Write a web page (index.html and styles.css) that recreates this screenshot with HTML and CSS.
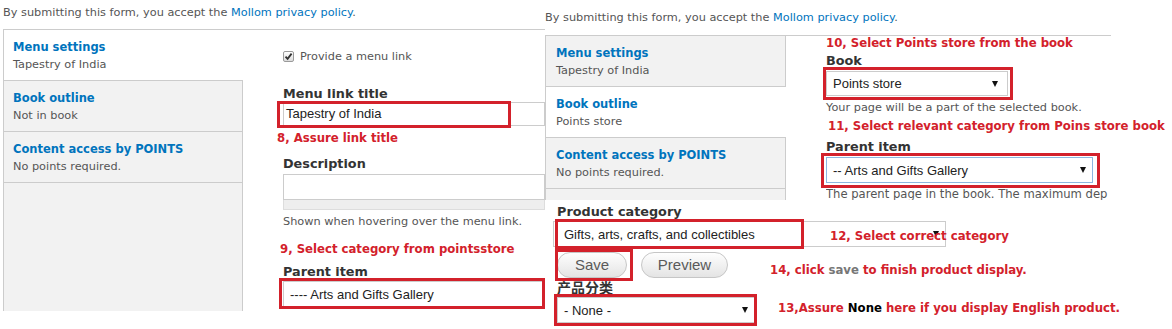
FILE: index.html
```html
<!DOCTYPE html>
<html lang="en">
<head>
<meta charset="UTF-8">
<title>Book page settings</title>
<link rel="stylesheet" href="styles.css">
</head>
<body>
<div class="board">

  <!-- left capture: menu settings tab -->
  <div class="shot shot-left">
    <p class="policy">By submitting this form, you accept the <a href="#">Mollom privacy policy</a>.</p>
    <div class="vtabs">
      <ul class="tab-list">
        <li class="tab is-active"><b>Menu settings</b><span>Tapestry of India</span></li>
        <li class="tab"><b>Book outline</b><span>Not in book</span></li>
        <li class="tab"><b>Content access by POINTS</b><span>No points required.</span></li>
      </ul>
      <div class="pane">
        <label class="check">
          <span class="checkbox">
            <svg width="9" height="9" viewBox="0 0 9 9"><path d="M1.5 4.6 L3.6 6.8 L7.6 1.6" fill="none" stroke="#333" stroke-width="1.8"/></svg>
          </span>
          Provide a menu link
        </label>
        <div class="label label-first">Menu link title</div>
        <div class="field">
          <div class="text-input">Tapestry of India</div>
          <span class="mark mark-title"></span>
        </div>
        <div class="note note-8">8, Assure link title</div>
        <div class="label label-desc">Description</div>
        <div class="textarea"></div>
        <div class="grippie"></div>
        <div class="help help-desc">Shown when hovering over the menu link.</div>
        <div class="note note-9">9, Select category from pointsstore</div>
        <div class="label label-parent">Parent item</div>
        <div class="field field-parent">
          <div class="select select-left">---- Arts and Gifts Gallery</div>
          <span class="mark mark-parent-left"></span>
        </div>
      </div>
    </div>
  </div>

  <!-- right capture: book outline tab -->
  <div class="shot shot-right">
    <p class="policy">By submitting this form, you accept the <a href="#">Mollom privacy policy</a>.</p>
    <div class="vtabs">
      <ul class="tab-list">
        <li class="tab"><b>Menu settings</b><span>Tapestry of India</span></li>
        <li class="tab is-active"><b>Book outline</b><span>Points store</span></li>
        <li class="tab"><b>Content access by POINTS</b><span>No points required.</span></li>
      </ul>
      <div class="pane pane-book">
        <div class="note note-10">10, Select Points store from the book</div>
        <div class="label label-book">Book</div>
        <div class="field field-book">
          <div class="select select-book">Points store<i class="caret"></i></div>
          <span class="mark mark-book"></span>
        </div>
        <div class="help help-book">Your page will be a part of the selected book.</div>
        <div class="note note-11">11, Select relevant category from Poins store book</div>
        <div class="label label-parent2">Parent item</div>
        <div class="field field-parent2">
          <div class="select select-parent is-focus">-- Arts and Gifts Gallery<i class="caret"></i></div>
          <span class="mark mark-parent"></span>
        </div>
        <div class="help help-parent">The parent page in the book. The maximum dep</div>
      </div>
    </div>

    <!-- pasted capture: product category + buttons -->
    <div class="product">
      <div class="label">Product category</div>
      <div class="field field-category">
        <div class="select select-category">Gifts, arts, crafts, and collectibles<i class="caret"></i></div>
        <span class="mark mark-category"></span>
        <span class="note note-12">12, Select correct category</span>
      </div>
      <div class="actions">
        <span class="field">
          <span class="btn btn-save">Save</span>
          <span class="mark mark-save"></span>
        </span>
        <span class="btn btn-preview">Preview</span>
        <span class="note note-14">14, click <em>save</em> to finish product display.</span>
      </div>
      <div class="label label-cn">产品分类</div>
      <div class="none-row">
        <div class="field">
          <div class="select select-none">- None -<i class="caret"></i></div>
          <span class="mark mark-none"></span>
        </div>
        <span class="note note-13">13,Assure <em>None</em> here if you display English product.</span>
      </div>
    </div>
  </div>

</div>
</body>
</html>
```

FILE: styles.css
```css
body {
  margin: 0;
  background: #fff;
  color: #555;
  font-family: "DejaVu Sans", Verdana, sans-serif;
  font-size: 11.3px;
}

.board {
  display: flex;
  width: 1172px;
  height: 329px;
  overflow: hidden;
}

.shot {
  position: relative;
  flex: none;
  height: 329px;
  overflow: hidden;
}

.shot-left {
  width: 545px;
}

.shot-right {
  width: 627px;
}

/* policy line */
.policy {
  margin: 0;
  line-height: 16px;
  white-space: nowrap;
}

.shot-left .policy {
  padding: 5px 0 8px 3px;
}

.shot-right .policy {
  padding: 10px 0 9px 0;
}

.policy a {
  color: #0074bd;
  text-decoration: none;
}

/* vertical tabs */
.vtabs {
  display: flex;
  border-top: 1px solid #ccc;
  border-left: 1px solid #ccc;
}

.shot-left .vtabs {
  margin-left: 3px;
  height: 281px;
}

.shot-right .vtabs {
  width: 565px;
  height: 294px;
}

.tab-list {
  flex: none;
  list-style: none;
  margin: 0;
  padding: 0;
  background: #f2f2f2;
  border-right: 1px solid #ccc;
}

.shot-left .tab-list {
  width: 238px;
}

.shot-right .tab-list {
  width: 239px;
}

.tab {
  box-sizing: border-box;
  height: 51px;
  padding: 8px 0 0 9px;
  border-bottom: 1px solid #ccc;
  line-height: 18px;
  white-space: nowrap;
}

.shot-right .tab {
  padding-left: 10px;
}

.tab b {
  display: block;
  color: #0074bd;
  font-size: 11.5px;
}

.tab span {
  display: block;
}

.tab.is-active {
  background: #fff;
  margin-right: -1px;
}

.pane {
  flex: 1;
  min-width: 0;
  padding-left: 40px;
  background: #fff;
  overflow: hidden;
  white-space: nowrap;
}

/* annotations in this pane run past its right edge */
.pane-book {
  overflow: visible;
}

/* form bits */
.field {
  position: relative;
}

.label {
  color: #333;
  font-weight: bold;
  font-size: 12.8px;
  line-height: 16px;
}

.help {
  line-height: 16px;
}

.check {
  display: flex;
  align-items: center;
  gap: 6px;
  height: 18px;
  margin-top: 17px;
}

.checkbox {
  box-sizing: border-box;
  width: 11px;
  height: 11px;
  border: 1px solid #9a9a9a;
  border-radius: 2px;
  background: linear-gradient(#fff, #dcdcdc);
  display: flex;
  align-items: center;
  justify-content: center;
}

.label-first {
  margin-top: 21px;
}

.text-input {
  box-sizing: border-box;
  width: 262px;
  height: 24px;
  padding-left: 2px;
  border: 1px solid #ccc;
  color: #222;
  font-family: "Liberation Sans", Arial, sans-serif;
  font-size: 13px;
  line-height: 22px;
}

.label-desc {
  margin-top: 10px;
}

.textarea {
  box-sizing: border-box;
  width: 262px;
  height: 26px;
  margin-top: 2px;
  border: 1px solid #ccc;
}

.grippie {
  box-sizing: border-box;
  width: 262px;
  height: 10px;
  background: #eee;
  border: 1px solid #ddd;
  border-top: 0;
}

.help-desc {
  margin-top: 4px;
}

.label-parent {
  margin-top: 7px;
}

.field-parent {
  margin-top: 1px;
}

.select {
  box-sizing: border-box;
  display: flex;
  align-items: center;
  justify-content: space-between;
  height: 26px;
  padding: 0 6px;
  border: 1px solid #ccc;
  background: #fff;
  color: #222;
  font-family: "Liberation Sans", Arial, sans-serif;
  font-size: 13px;
}

.select-left {
  width: 262px;
}

.caret {
  width: 0;
  height: 0;
  border-left: 3.5px solid transparent;
  border-right: 3.5px solid transparent;
  border-top: 6px solid #111;
}

/* right tab pane */
.label-book {
  margin-top: 3px;
}

.field-book {
  margin-top: 2px;
}

.select-book {
  width: 182px;
  height: 25px;
  padding-right: 9px;
}

.help-book {
  margin-top: 4px;
}

.label-parent2 {
  margin-top: 6px;
}

.field-parent2 {
  margin-top: 2px;
}

.select-parent {
  width: 267px;
}

.select.is-focus {
  border-color: #8db6df;
}

.help-parent {
  width: 284px;
  margin-top: 3px;
  overflow: hidden;
  font-size: 11.6px;
}

/* pasted product capture */
.product {
  position: absolute;
  left: 0;
  top: 200px;
  right: 0;
  bottom: 0;
  padding: 4px 0 0 12px;
  background: #fff;
  white-space: nowrap;
}

.field-category {
  margin: 1px 0 0 -4px;
}

.select-category {
  width: 393px;
  padding-left: 10px;
}

.actions {
  display: flex;
  align-items: flex-start;
  margin-top: 5px;
}

.btn {
  box-sizing: border-box;
  display: block;
  height: 26px;
  border: 1px solid #c6c6c6;
  border-radius: 13px;
  background: linear-gradient(#fefefe, #e4e4e4);
  color: #5a5a5a;
  font-family: "Liberation Sans", Arial, sans-serif;
  font-size: 15px;
  line-height: 24px;
  text-align: center;
}

.btn-save {
  width: 70px;
}

.btn-preview {
  width: 87px;
  margin-left: 14px;
}

.label-cn {
  margin-top: 2px;
  font-family: "DejaVu Sans", "Noto Sans CJK SC", sans-serif;
  font-size: 14px;
}

.none-row {
  display: flex;
  align-items: flex-start;
  margin-top: 1px;
}

.select-none {
  width: 198px;
}

/* red annotations */
.mark {
  position: absolute;
  box-sizing: border-box;
  border: 3px solid #d3212b;
}

.mark-title {
  left: -6px;
  top: -1px;
  width: 234px;
  height: 27px;
}

.mark-parent-left {
  left: -4px;
  top: -3px;
  width: 266px;
  height: 31px;
}

.mark-book {
  left: -3px;
  top: -4px;
  width: 190px;
  height: 33px;
}

.mark-parent {
  left: -5px;
  top: -4px;
  width: 279px;
  height: 35px;
}

.mark-category {
  left: 2px;
  top: -2px;
  width: 249px;
  height: 30px;
}

.mark-save {
  left: -2px;
  top: -3px;
  width: 78px;
  height: 32px;
}

.mark-none {
  left: -3px;
  top: -3px;
  width: 203px;
  height: 32px;
}

.note {
  color: #d3212b;
  font-family: "DejaVu Sans Condensed", "DejaVu Sans", sans-serif;
  font-weight: bold;
  font-size: 13px;
  line-height: 16px;
}

.note em {
  font-style: normal;
  color: #777;
}

.note-8 {
  margin: 4px 0 0 -6px;
}

.note-9 {
  margin: 11px 0 0 -3px;
}

.note-10 {
  line-height: 14px;
}

.note-11 {
  margin: 3px 0 0 2px;
  line-height: 14px;
}

.note-12 {
  position: absolute;
  left: 277px;
  top: 7px;
}

.note-14 {
  margin: 10px 0 0 42px;
}

.note-13 {
  margin: 3px 0 0 23px;
}

.note-13 em {
  color: #000;
}
```
